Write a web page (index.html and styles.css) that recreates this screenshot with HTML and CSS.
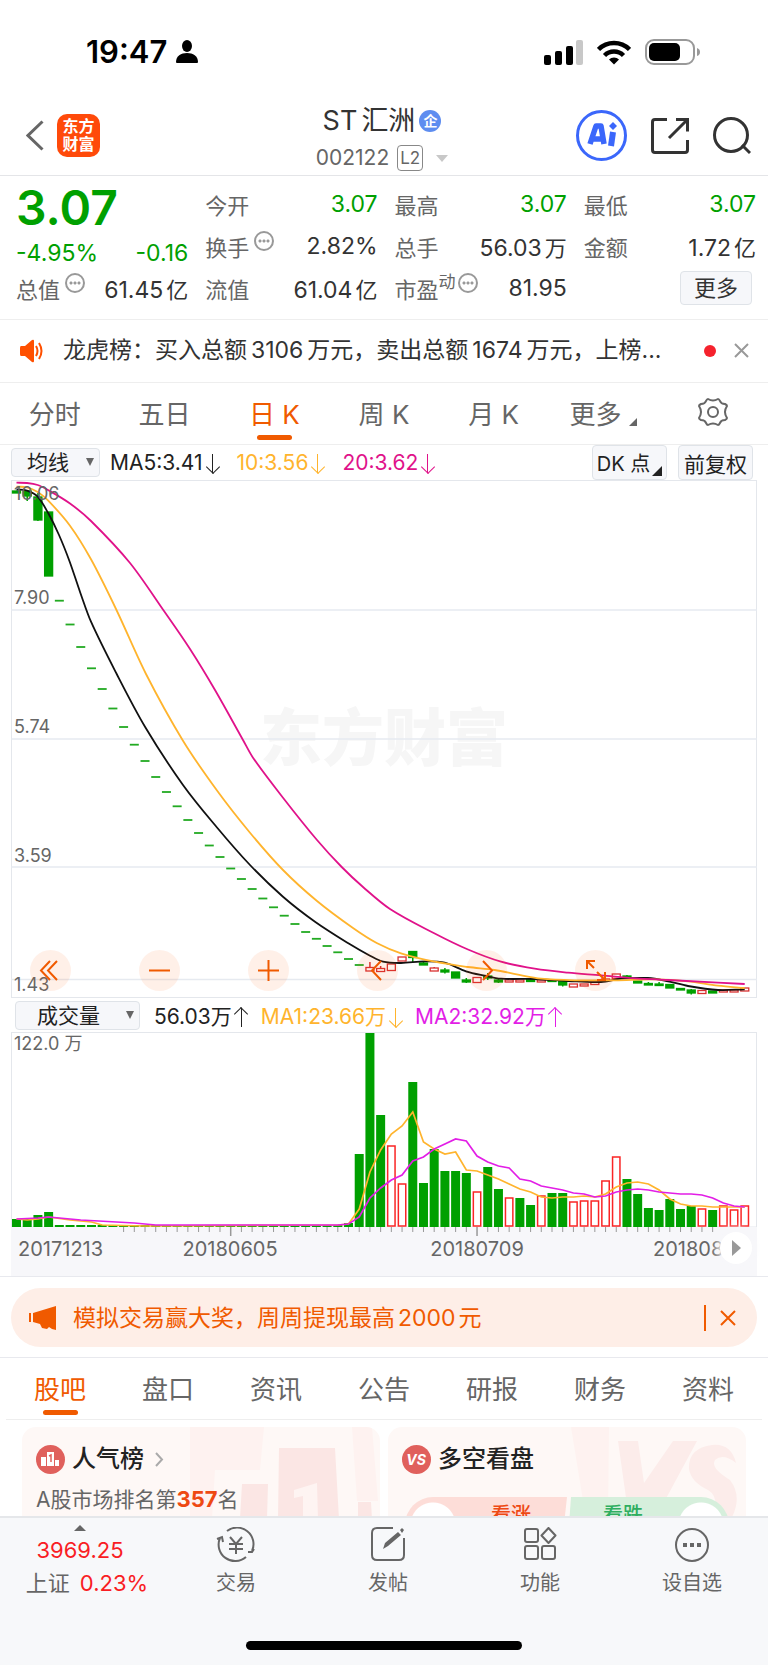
FILE: index.html
```html
<!DOCTYPE html>
<html lang="zh-CN">
<head>
  <meta charset="UTF-8">
  <title>ST汇洲 002122</title>
  <meta name="viewport" content="width=device-width, initial-scale=1.0">
  <link rel="stylesheet" href="styles.css">
</head>
<body>

  <div class="statusbar">
    <span class="clock">19:47
      <svg width="22" height="24" viewBox="0 0 22 24"><ellipse cx="11" cy="6" rx="5" ry="6"/><path d="M0 22c0-6 5-9 11-9s11 3 11 9q0 1-1 1H1q-1 0-1-1z"/></svg>
    </span>
    <span class="status-icons">
      <svg width="39" height="25" viewBox="0 0 39 25"><rect y="15" width="7" height="10" rx="2"/><rect x="11" y="11" width="7" height="14" rx="2"/><rect x="22" y="6" width="7" height="19" rx="2"/><rect x="32" width="7" height="25" rx="2" fill="#c8c8c8"/></svg>
      <svg width="34" height="25" viewBox="0 0 34 25" fill="none" stroke="#000" stroke-width="4.5"><path d="M1.500 9.500a22 22 0 0 1 31 0"/><path d="M7.500 15.500a13.500 13.500 0 0 1 19 0"/><path d="M17 24.500l-5-5a7 7 0 0 1 10 0z" fill="#000" stroke="none"/></svg>
      <svg width="55" height="26" viewBox="0 0 55 26"><rect x="1" y="1" width="48" height="24" rx="8" fill="none" stroke="#999" stroke-width="2"/><rect x="4" y="4" width="31" height="18" rx="5"/><path d="M52 9q3 1 3 4t-3 4z" fill="#999"/></svg>
    </span>
  </div>

  <header class="topbar">
    <div class="top-left">
      <button class="icon-btn" aria-label="返回"><svg width="18" height="31" viewBox="0 0 18 31" fill="none" stroke="#666" stroke-width="3"><path d="M16.500 1.500L2 15.500l14.500 14"/></svg></button>
      <a class="logo" href="#">东方<br>财富</a>
    </div>
    <div class="stock">
      <h1>ST<span>汇洲</span><i class="badge">企</i></h1>
      <button class="code">002122 <span class="l2">L2</span><i class="caret"></i></button>
    </div>
    <div class="top-right">
      <button class="icon-btn" aria-label="AI">
        <svg width="51" height="51" viewBox="0 0 51 51"><circle cx="25.500" cy="25.500" r="24" fill="#fff" stroke="#3b67fb" stroke-width="3"/><path d="M14 34L20 16h5l3 18M17 29h9" fill="none" stroke="#3b67fb" stroke-width="5.500" stroke-linejoin="round"/><path d="M37 22l-2 14" stroke="#3b67fb" stroke-width="6"/><path d="M37 12l4 4-4 4-4-4z" fill="#3b67fb"/></svg>
      </button>
      <button class="icon-btn" aria-label="分享">
        <svg width="38" height="36" viewBox="0 0 38 36" fill="none" stroke="#333" stroke-width="3"><path d="M16 1.500H4Q1.500 1.500 1.500 4v28q0 2.500 2.500 2.500h30q2.500 0 2.500-2.500V22M25 1.500h11.500v12M36 2L18 20"/></svg>
      </button>
      <button class="icon-btn" aria-label="搜索">
        <svg width="38" height="38" viewBox="0 0 38 38" fill="none" stroke="#333" stroke-width="3"><circle cx="18" cy="18" r="16.500"/><path d="M29 28l8 8"/></svg>
      </button>
    </div>
  </header>

  <main>
    <section class="quote">
      <div class="price">3.07</div>
      <div class="item up"><span>今开</span><b>3.07</b></div>
      <div class="item up"><span>最高</span><b>3.07</b></div>
      <div class="item up"><span>最低</span><b>3.07</b></div>

      <div class="change"><span>-4.95%</span><span>-0.16</span></div>
      <div class="item"><span>换手<i class="dots"></i></span><b>2.82%</b></div>
      <div class="item"><span>总手</span><b>56.03<em>万</em></b></div>
      <div class="item"><span>金额</span><b>1.72<em>亿</em></b></div>

      <div class="item"><span>总值<i class="dots"></i></span><b>61.45<em>亿</em></b></div>
      <div class="item"><span>流值</span><b>61.04<em>亿</em></b></div>
      <div class="item"><span>市盈<sup>动</sup><i class="dots"></i></span><b>81.95</b></div>
      <div class="more-cell"><button class="more">更多</button></div>
    </section>

    <section class="notice">
      <svg width="24" height="28" viewBox="0 0 24 28" fill="#ff5000"><path d="M1 9h4l7-6q2-1 2 1v20q0 2-2 1l-7-6H1q-1 0-1-2v-6q0-2 1-2z"/><path d="M16 9q3 5 0 10M19 6q5 8 0 16" fill="none" stroke="#ff5000" stroke-width="2"/></svg>
      <p>龙虎榜：买入总额<span>3106</span>万元，卖出总额<span>1674</span>万元，上榜...</p>
      <i class="dot"></i>
      <button class="icon-btn" aria-label="关闭"><svg width="15" height="15" viewBox="0 0 15 15" stroke="#999" stroke-width="2"><path d="M1 1l13 13M14 1L1 14"/></svg></button>
    </section>

    <nav class="tabs">
      <button>分时</button>
      <button>五日</button>
      <button class="active">日 K</button>
      <button>周 K</button>
      <button>月 K</button>
      <button>更多<i class="corner"></i></button>
      <button aria-label="设置"><svg width="30" height="28" viewBox="0 0 30 28" fill="none" stroke="#666" stroke-width="2"><path d="M10 1q5 3 10 0 1 0 2 2 1 3 5 3 2 1 2 2-4 6 0 12 0 1-2 2-4 0-5 3-1 2-2 2-5-3-10 0-1 0-2-2-1-3-5-3-2-1-2-2 4-6 0-12 0-1 2-2 4 0 5-3 1-2 2-2z" stroke-linejoin="round"/><circle cx="15" cy="14" r="5"/></svg></button>
    </nav>

    <div class="ma-row">
      <label class="picker"><select aria-label="均线"><option>均线</option></select></label>
      <span>MA5:3.41<i class="arrow"></i></span>
      <span class="c-orange">10:3.56<i class="arrow"></i></span>
      <span class="c-pink">20:3.62<i class="arrow"></i></span>
      <div class="ma-btns">
        <button class="dk">DK 点</button>
        <button>前复权</button>
      </div>
    </div>

    <div class="chart">
      <svg id="kline" viewBox="11 480 746 518"></svg>
      <div class="chart-btns">
        <button aria-label="最左"><svg viewBox="0 0 41 41"><path d="M20 11l-9 9.500 9 9.500M27 11l-9 9.500 9 9.500"/></svg></button>
        <button aria-label="缩小"><svg viewBox="0 0 41 41"><path d="M10 20.500h21"/></svg></button>
        <button aria-label="放大"><svg viewBox="0 0 41 41"><path d="M10 20.500h21M20.500 10v21"/></svg></button>
        <button aria-label="左移"><svg viewBox="0 0 41 41"><path d="M24 11l-9 9.500 9 9.500"/></svg></button>
        <button aria-label="右移"><svg viewBox="0 0 41 41"><path d="M17 11l9 9.500-9 9.500"/></svg></button>
        <button aria-label="全屏"><svg viewBox="0 0 41 41"><path d="M12 19v-8h8M12 11l7 7M30 22v8h-8M30 30l-8-8"/></svg></button>
      </div>
    </div>

    <div class="vol-row">
      <label class="picker wide"><select aria-label="成交量"><option>成交量</option></select></label>
      <span>56.03万<i class="arrow rise"></i></span>
      <span class="c-orange">MA1:23.66万<i class="arrow"></i></span>
      <span class="c-purple">MA2:32.92万<i class="arrow rise"></i></span>
    </div>

    <div class="chart">
      <svg id="volume" viewBox="11 1032 746 244"></svg>
      <button class="play" aria-label="下一页"><svg width="11" height="16" viewBox="0 0 11 16" fill="#999"><path d="M1 0l9 8-9 8z"/></svg></button>
    </div>

    <div class="promo-wrap">
      <div class="promo">
        <svg width="28" height="26" viewBox="0 0 28 26" fill="#f05a00"><path d="M0 8h2v9H0zM4 8L27 1v24l-4-1-3-2-2 2-5-1-2-4-7-2z"/></svg>
        <a href="#">模拟交易赢大奖，周周提现最高<span>2000</span>元</a>
        <button class="icon-btn" aria-label="关闭"><svg width="16" height="16" viewBox="0 0 16 16" stroke="#f05a00" stroke-width="2"><path d="M1 1l14 14M15 1L1 15"/></svg></button>
      </div>
    </div>

    <nav class="tabs info-tabs">
      <button class="active">股吧</button>
      <button>盘口</button>
      <button>资讯</button>
      <button>公告</button>
      <button>研报</button>
      <button>财务</button>
      <button>资料</button>
    </nav>

    <div class="cards">
      <section class="card">
        <svg class="card-bg" width="190" height="92" viewBox="0 0 190 92"><path d="M0 0h74l-4 43H25l-3 49H0zM162 0h20l6 74h-21z" fill="#fef2f0"/><path d="M89 21h56l4 71H88zM52 57h26l-1 35H50zM168 75h13l1 17h-14z" fill="#fbe6e4"/><path d="M104 63l23-7 1 36h-15V69l-9 2z" fill="#fef4f2"/></svg>
        <h2>
          <svg width="29" height="29" viewBox="0 0 29 29"><circle cx="14.500" cy="14.500" r="14.500" fill="#e0605c"/><path d="M5 12h5v9H5zM11 7h7v14h-7zM19 15h4v6h-4z" fill="#fff"/><path d="M13 11l2-1v7" fill="none" stroke="#e0605c" stroke-width="1.500"/></svg>
          人气榜
          <svg width="9" height="15" viewBox="0 0 9 15" fill="none" stroke="#aaa" stroke-width="2"><path d="M1 1l6 6.500L1 14"/></svg>
        </h2>
        <p>A股市场排名第<strong>357</strong>名</p>
      </section>
      <section class="card">
        <svg class="card-bg" width="190" height="92" viewBox="0 0 190 92"><path d="M15 0h38l-1 92H30z" fill="#fef2f0"/><path d="M62 14h20l6 42 29-42h24L99 92H73zM180 36q-5-20-24-18-24 3-23 24 2 13 19 21 12 7 5 29h18q12-22-1-39-20-12-15-20 8-7 21 3z" fill="#fcecea"/></svg>
        <h2>
          <svg width="29" height="29" viewBox="0 0 29 29"><circle cx="14.500" cy="14.500" r="14.500" fill="#e0605c"/><text x="14" y="20" text-anchor="middle" class="vs">VS</text></svg>
          多空看盘
        </h2>
        <div class="vote">
          <button class="vote-up">看涨</button>
          <button class="vote-down">看跌</button>
        </div>
      </section>
    </div>
  </main>

  <footer class="bottombar">
    <a class="index" href="#">
      <i class="tri"></i>
      <span>3969.25</span>
      <span><em>上证</em>0.23%</span>
    </a>
    <a href="#">
      <svg width="40" height="36" viewBox="0 0 40 36"><path d="M11 4a16.500 16.500 0 0 1 25 20M30 30A16.500 16.500 0 0 1 4 11M1 12l5-2 1 5M32 25l4 0 2-3"/><path d="M14 10l6 7 6-7M20 17v10M13 17h14M13 22h14"/></svg>
      交易
    </a>
    <a href="#">
      <svg width="34" height="34" viewBox="0 0 34 34"><path d="M22 1H6Q1 1 1 6v22q0 5 5 5h22q5 0 5-5V11"/><path d="M12 22l2-6L27 5l3 3-13 11zM29 3l2-2 2 2-2 3z" fill="#666" stroke="none"/></svg>
      发帖
    </a>
    <a href="#">
      <svg width="34" height="34" viewBox="0 0 34 34"><rect x="2" y="2" width="13" height="13" rx="2"/><rect x="2" y="19" width="13" height="13" rx="2"/><rect x="19" y="19" width="13" height="13" rx="2"/><path d="M25.500 1l7 7.500-7 7.500-7-7.500z" stroke-linejoin="round"/></svg>
      功能
    </a>
    <a href="#">
      <svg width="36" height="36" viewBox="0 0 36 36"><circle cx="18" cy="18" r="16"/><path d="M9 16h4v4H9zM16 16h4v4h-4zM23 16h4v4h-4z" fill="#666" stroke="none"/></svg>
      设自选
    </a>
    <div class="home"></div>
  </footer>

  <script src="script.js"></script>
</body>
</html>
```
FILE: styles.css
```css
* {
  box-sizing: border-box;
}

body {
  margin: 0;
  height: 100vh;
  display: flex;
  flex-direction: column;
  overflow: hidden;
  background: #fff;
  color: #333;
  font-family: Inter, "Noto Sans CJK SC", sans-serif;
  font-size: 22px;
}

button, select {
  font: inherit;
  color: inherit;
  background: none;
  border: 0;
  padding: 0;
  margin: 0;
}

a {
  color: inherit;
  text-decoration: none;
}

i, em, b {
  font-style: normal;
  font-weight: normal;
}

svg {
  display: block;
  flex: none;
}

h1, h2, p {
  margin: 0;
  font-weight: normal;
}

.icon-btn {
  display: block;
}

/* status bar */
.statusbar {
  display: flex;
  justify-content: space-between;
  align-items: center;
  padding: 34px 68px 26px 86px;
  line-height: 36px;
  color: #000;
}

.clock {
  display: flex;
  align-items: center;
  gap: 9px;
  font-size: 31px;
  font-weight: 600;
}

.status-icons {
  display: flex;
  align-items: center;
  gap: 14px;
}

/* title bar */
.topbar {
  display: grid;
  grid-template-columns: 1fr auto 1fr;
  align-items: center;
  padding: 8px 17px 4px 13px;
  border-bottom: 1px solid #e4e5e8;
}

.top-left, .top-right {
  display: flex;
  align-items: center;
  padding-bottom: 4px;
}

.top-left {
  gap: 13px;
  padding-left: 13px;
}

.top-right {
  justify-content: flex-end;
  gap: 24px;
}

.logo {
  width: 43px;
  height: 43px;
  padding-top: 3px;
  border-radius: 10px;
  background: #ff4a0a;
  color: #fff;
  font-size: 16px;
  font-weight: bold;
  line-height: 18px;
  text-align: center;
}

.stock {
  display: flex;
  flex-direction: column;
  align-items: center;
  gap: 7px;
}

.stock h1 {
  display: flex;
  align-items: center;
  gap: 4px;
  font-size: 27px;
  line-height: 34px;
}

.badge {
  width: 22px;
  height: 22px;
  border-radius: 50%;
  background: #5e8df0;
  color: #fff;
  font-size: 14px;
  font-weight: bold;
  line-height: 21px;
  text-align: center;
}

.code {
  display: flex;
  align-items: center;
  gap: 8px;
  color: #666;
  font-size: 21px;
  line-height: 26px;
}

.l2 {
  padding: 0 2px;
  border: 1px solid #888;
  border-radius: 4px;
  font-size: 17px;
  line-height: 24px;
}

.caret {
  margin-left: 5px;
  border: 6px solid transparent;
  border-top: 7px solid #c8c8c8;
  border-bottom: 0;
}

/* main column, cut off by the bottom bar */
main {
  flex: 1;
  min-height: 0;
  overflow: hidden;
}

.quote {
  display: grid;
  grid-template-columns: repeat(4, 1fr);
  column-gap: 17px;
  grid-auto-rows: 42px;
  padding: 7px 12px 10px 16px;
  border-bottom: 1px solid #eee;
}

.quote > div {
  display: flex;
  align-items: center;
  justify-content: space-between;
  white-space: nowrap;
}

.quote .price {
  padding-top: 6px;
  color: #00a000;
  font-size: 48px;
  font-weight: 600;
}

.quote .change {
  padding-top: 14px;
  color: #00a000;
  font-size: 23px;
}

.item span {
  display: flex;
  align-items: center;
  color: #666;
}

.item b {
  font-size: 23px;
}

.item em {
  margin-left: 3px;
  font-size: 22px;
}

.up b {
  color: #00a000;
}

.item sup {
  align-self: flex-start;
  font-size: 17px;
  line-height: 20px;
}

.dots {
  width: 20px;
  height: 20px;
  margin: 0 0 10px 5px;
  border: 2px solid #999;
  border-radius: 50%;
  background: radial-gradient(circle, #999 1px, transparent 2px) center / 4px 4px repeat-x;
  background-clip: content-box;
  padding: 0 2px;
}

sup + .dots {
  margin-left: 2px;
}

.quote .more-cell {
  justify-content: flex-end;
}

.more {
  width: 72px;
  height: 34px;
  margin-right: 4px;
  border: 1px solid #dfe3e8;
  border-radius: 4px;
  background: #f6f7fa;
  line-height: 32px;
}

.notice {
  display: flex;
  align-items: center;
  padding: 15px 19px 16px 20px;
  border-bottom: 1px solid #eee;
  line-height: 31px;
}

.notice p {
  flex: 1;
  margin-left: 19px;
  font-size: 23px;
  white-space: nowrap;
}

.notice p span {
  margin: 0 4px;
}

.dot {
  width: 12px;
  height: 12px;
  margin-right: 18px;
  border-radius: 50%;
  background: #f5222d;
}

.tabs {
  display: grid;
  grid-template-columns: repeat(7, 1fr);
  border-bottom: 1px solid #eee;
}

.tabs button {
  display: flex;
  align-items: center;
  justify-content: center;
  position: relative;
  height: 61px;
  padding-bottom: 3px;
  color: #666;
  font-size: 26px;
}

.tabs .active {
  color: #f05a00;
}

.tabs .active::after {
  content: "";
  position: absolute;
  bottom: 4px;
  width: 35px;
  height: 5px;
  border-radius: 3px;
  background: #f05a00;
}

.corner {
  align-self: flex-end;
  margin: 0 0 15px 8px;
  border: 4px solid #666;
  border-top-color: transparent;
  border-left-color: transparent;
}

/* indicator rows */
.ma-row, .vol-row {
  display: flex;
  align-items: center;
  gap: 19px;
  padding: 0 15px 0 11px;
  height: 35px;
  color: #222;
  font-size: 21px;
  white-space: nowrap;
}

.vol-row {
  gap: 14px;
  height: 34px;
  padding-left: 15px;
}

.picker {
  position: relative;
  display: flex;
}

.picker select {
  appearance: none;
  width: 89px;
  height: 29px;
  padding-left: 15px;
  border: 1px solid #dfe3e8;
  border-radius: 4px;
  background: #f6f7fa;
}

.picker.wide select {
  width: 125px;
  padding-left: 21px;
}

.picker::after {
  content: "";
  position: absolute;
  right: 6px;
  top: 10px;
  border: 4px solid transparent;
  border-top: 8px solid #666;
  border-bottom: 0;
}

.ma-row .picker {
  margin-right: -9px;
}

/* thin arrow drawn from a line and a rotated corner */
.arrow {
  display: inline-block;
  position: relative;
  width: 1px;
  height: 19px;
  margin: 0 5px 0 9px;
  background: currentColor;
  vertical-align: -3px;
}

.arrow::after {
  content: "";
  position: absolute;
  left: -4px;
  bottom: 1px;
  width: 9px;
  height: 9px;
  border-right: 1px solid;
  border-bottom: 1px solid;
  transform: rotate(45deg);
}

.arrow.rise {
  transform: rotate(180deg);
}

.c-orange { color: #ffb42d; }
.c-pink { color: #e0128a; }
.c-purple { color: #e21ee6; }

.ma-btns {
  display: flex;
  gap: 11px;
  margin-left: auto;
}

.ma-btns button {
  position: relative;
  width: 75px;
  height: 35px;
  border: 1px solid #dfe3e8;
  border-radius: 4px;
  background: #f6f7fa;
}

.ma-btns .dk {
  padding-right: 12px;
  font-size: 20px;
}

.dk::after {
  content: "";
  position: absolute;
  right: 4px;
  bottom: 3px;
  border: 5px solid #222;
  border-top-color: transparent;
  border-left-color: transparent;
}

/* charts */
.chart {
  position: relative;
  margin: 0 11px;
}

.chart > svg {
  width: 100%;
  height: auto;
}

.chart text {
  fill: #666;
  font-size: 18px;
}

.chart .date {
  font-size: 20px;
}

.chart .watermark {
  fill: #f6f6f6;
  font-size: 62px;
  font-weight: 900;
}

.chart-btns {
  position: absolute;
  left: 0;
  right: 0;
  bottom: 7px;
  display: flex;
  justify-content: space-between;
  padding: 0 141px 0 19px;
}

.chart-btns button {
  width: 41px;
  height: 41px;
  border-radius: 50%;
  background: rgba(255, 90, 0, 0.09);
}

.chart-btns path {
  fill: none;
  stroke: #f05a00;
  stroke-width: 2;
}

.play {
  position: absolute;
  right: 5px;
  bottom: 12px;
  width: 32px;
  height: 32px;
  display: flex;
  align-items: center;
  justify-content: center;
  border-radius: 50%;
  background: #fff;
  box-shadow: 0 0 8px 3px #f7f7fa;
}

.promo-wrap {
  padding: 11px 11px 10px;
  border: 1px solid #e8e9ee;
  border-width: 1px 0;
}

.promo {
  display: flex;
  align-items: center;
  gap: 16px;
  height: 59px;
  padding: 0 21px 0 18px;
  border-radius: 30px;
  background: #feeee7;
  color: #f05a00;
}

.promo a {
  flex: 1;
  padding-bottom: 3px;
  font-size: 23px;
}

.promo a span {
  margin: 0 3px;
}

.promo .icon-btn {
  padding: 5px 0 5px 14px;
  border-left: 2px solid #f05a00;
}

.info-tabs {
  margin: 0 6px;
}

.cards {
  display: grid;
  grid-template-columns: 1fr 1fr;
  gap: 8px;
  padding: 7px 22px 0;
}

.card {
  position: relative;
  overflow: hidden;
  height: 130px;
  padding: 15px 14px;
  border-radius: 14px;
  background: #fef8f6;
}

.card-bg {
  position: absolute;
  right: 0;
  top: 0;
}

.card h2 {
  position: relative;
  display: flex;
  align-items: center;
  gap: 7px;
  font-size: 24px;
  font-weight: 500;
  line-height: 34px;
  color: #222;
}

.card h2 svg:last-child:not(:first-child) {
  margin-left: 4px;
}

.card p {
  position: relative;
  margin-top: 6px;
  color: #666;
  font-size: 21px;
  line-height: 34px;
}

.card strong {
  color: #ee4913;
  font-size: 22px;
  font-weight: 700;
}

.vs {
  fill: #fff;
  font-size: 14px;
  font-weight: bold;
  font-style: italic;
}

.vote {
  position: relative;
  display: flex;
  margin: 21px 3px 0;
}

.vote button {
  flex: 1;
  height: 56px;
  padding: 0 36px 24px;
  font-size: 20px;
  font-weight: 500;
}

.vote .vote-up {
  border-radius: 28px 0 0 0;
  background: radial-gradient(circle at 28px 28px, #fff 22px, #fdddd8 23px);
  clip-path: polygon(0 0, 100% 0, calc(100% - 6px) 100%, 0 100%);
  color: #ee4913;
  text-align: right;
}

.vote .vote-down {
  border-radius: 0 28px 0 0;
  background: radial-gradient(circle at calc(100% - 28px) 28px, #fff 22px, #d6efdc 23px);
  clip-path: polygon(4px 0, 100% 0, 100% 100%, 0 100%);
  color: #2fae60;
  text-align: left;
}

/* bottom bar */
.bottombar {
  display: grid;
  grid-template-columns: 160px repeat(4, 1fr);
  border-top: 2px solid #e5e7ea;
  background: #f7f8fa;
  color: #666;
  font-size: 20px;
}

.bottombar a {
  display: flex;
  flex-direction: column;
  align-items: center;
  justify-content: space-between;
  height: 80px;
  padding-top: 9px;
  line-height: 30px;
}

.bottombar svg {
  fill: none;
  stroke: #666;
  stroke-width: 2;
}

.bottombar .index {
  color: #f91d24;
  font-size: 22px;
}

.bottombar .index em {
  margin: 0 10px 0 14px;
  color: #666;
}

.tri {
  border: 6px solid transparent;
  border-top: 0;
  border-bottom: 6px solid #666;
  margin-top: -2px;
}

.home {
  grid-column: 1 / -1;
  justify-self: center;
  width: 36%;
  height: 9px;
  margin: 43px 0 15px;
  border-radius: 5px;
  background: #000;
}
```
FILE: script.js
```js
const GREEN = "#00a000";
const RED = "#d93030";
const FIRST_X = 16.5;
const STEP = 10.71;

const xAt = i => FIRST_X + i * STEP;

// limit-down days, one flat dash each, starting with the 5th bar
const dashes = [
  600.7, 624.5, 647, 668.3, 689, 708.5, 727, 744.7, 761, 777, 792, 806.3, 820,
  833, 845.5, 857, 868.5, 879, 889, 898.5, 907.3, 915.7, 924, 932, 938.8, 946, 952.3, 959, 965
];

// [index, top, bottom, type, high, low]: g = fall, r = rise
const candles = [
  [0, 491, 493, "g"], [1, 491, 496, "g", 490, 501], [2, 497, 520, "g", 493, 521], [3, 512, 576, "g"],
  [33, 967.5, 971, "r", 962, 971], [34, 968.5, 971.5, "r", 966, 971.5], [35, 964, 970.5, "r"],
  [36, 957, 961, "r"], [37, 951.5, 957.5, "g", 951, 962], [38, 963, 965, "g", 961, 965],
  [39, 968, 971, "r", 967, 971], [40, 970, 972, "g", 968, 973.5], [41, 972, 978, "g"],
  [42, 980, 982, "g", 978, 983], [43, 977.5, 982.5, "r"], [44, 976, 978, "g", 973, 980],
  [45, 980, 982, "g", 979, 983], [46, 980, 982, "r"], [47, 980, 982, "r"], [48, 979.5, 981.5, "g"],
  [49, 980, 982, "r"], [50, 980, 981.5, "g"], [51, 981.5, 985, "g", 980, 986.5], [52, 984, 987, "r"],
  [53, 984, 986, "r"], [54, 982, 984.5, "r"], [55, 979, 980.5, "r"], [56, 974, 978.5, "r"],
  [57, 976, 977.5, "g", 975, 979], [58, 981, 983, "g"], [59, 983.5, 985, "g", 982, 985],
  [60, 984, 985.5, "g", 982, 986], [61, 984.5, 988, "g"], [62, 988.5, 990, "g"],
  [63, 990, 993, "g", 989, 994.5], [64, 990.5, 993.5, "r"], [65, 991, 993, "g"], [66, 990, 992, "r"],
  [67, 990, 992, "r"], [68, 988, 991, "r"]
];

const priceLines = [
  ["#111", "16.5,489.5 27,490.7 37.7,496.7 48.3,513.3 59,535 69.7,561.7 80.3,592.7 91,621.7 116.7,674 145,726.7 183,785 217,827.5 250,865 283,896.7 315,921.7 350,944.3 370,955.7 383,961.7 401,963 424.7,961.3 444.7,962.7 466,971.3 484.7,975.7 501,978.7 534.7,979 568,981 601,982 621,978.7 648,978 668,981.3 688,986 718,990 744.7,989.3"],
  ["#ffb42d", "16.5,486.7 27,487.3 37.7,492 48.3,500.7 70,525.7 91,559.3 116,609 146,674 183,740.7 217,790.5 250,832.7 283,870 317,901 353,928 376.7,943 401,953.3 434.7,961.7 468,967 494.7,970 518,974.7 541,978.7 574.7,980.3 615,980.3 655,979.3 688,981.3 718,985.7 744.7,988"],
  ["#e0128a", "16.5,482.7 27,483 37.7,485 48,490 70,503.5 91,521 130,563 164,611 190,649 215,690 243,740 253,757.7 283,797.7 317,840 341.7,867 363,887 390,909 434.7,933.5 468,949.5 501,961.7 534.7,968.7 568,972.7 601,975.3 634.7,978.3 668,980 744.7,984"]
];

const volumes = [8, 8, 12, 15]
  .concat(Array(27).fill(2), [4, 73, 194, 112, 82, 44, 145, 44, 78, 56, 56, 54, 36, 60, 38, 30, 29, 22, 32, 34, 34,
    26, 27, 27, 47, 71, 48, 33, 19, 17, 28, 18, 21, 19, 17, 22, 18, 22]);
const risen = [35, 36, 43, 46, 49, 52, 53, 54, 55, 56, 64, 66, 67, 68];
const majorTicks = [20, 43];

// [index, height] pairs for the lead-in, then one height for each bar from 31 on
const volumeLines = [
  ["#ffb42d", [[0, 8], [1, 7], [2, 8], [3, 10], [5, 7], [7, 5], [8, 2], [12, 1], [30, 2]],
    [3, 18, 55, 77, 93, 101, 115, 85, 78, 73, 75, 57, 56, 52, 48, 43, 38, 35, 30, 29, 30, 30, 31, 30, 33, 40, 44, 45, 43, 37, 28, 23, 21, 21, 20, 20, 20, 20]],
  ["#e21ee6", [[0, 8], [2, 9], [3, 10], [6, 7], [11, 4], [13, 2], [30, 2]],
    [3, 10, 29, 39, 47, 52, 66, 70, 78, 83, 88, 86, 71, 65, 61, 59, 48, 46, 41, 39, 37, 34, 33, 30, 31, 35, 37, 38, 37, 35, 34, 33, 33, 32, 29, 24, 21, 20]]
];

function line(x1, y1, x2, y2, color, width = 1) {
  return `<line x1="${x1}" y1="${y1}" x2="${x2}" y2="${y2}" stroke="${color}" stroke-width="${width}"/>`;
}

function polyline(points, color) {
  return `<polyline points="${points}" fill="none" stroke="${color}" stroke-width="1.7"/>`;
}

// bezier through all points, handles scaled to each segment so uneven spacing stays smooth
function curve(points, color) {
  const p = points.split(" ").map(s => s.split(",").map(Number));
  const slope = i => {
    const a = p[Math.max(i - 1, 0)];
    const b = p[Math.min(i + 1, p.length - 1)];
    return (b[1] - a[1]) / (b[0] - a[0]);
  };
  let d = `M${p[0]}`;
  for (let i = 1; i < p.length; i++) {
    const dx = (p[i][0] - p[i - 1][0]) / 3;
    d += `C${p[i - 1][0] + dx},${p[i - 1][1] + dx * slope(i - 1)} ${p[i][0] - dx},${p[i][1] - dx * slope(i)} ${p[i]}`;
  }
  return `<path d="${d}" fill="none" stroke="${color}" stroke-width="1.8"/>`;
}

function drawKline() {
  let out = `<rect x="11.5" y="480.5" width="745" height="517" fill="#fff" stroke="#e4e7ec"/>`;
  out += `<text class="watermark" x="384" y="761" text-anchor="middle">东方财富</text>`;
  [610, 739, 867, 979.5].forEach(y => out += line(11, y, 757, y, "#e6eaf0", 1.5));

  dashes.forEach((y, n) => {
    const x = xAt(n + 4);
    out += line(x - 4.5, y, x + 4.5, y, "#22aa22", 1.8);
  });

  candles.forEach(([i, top, bottom, type, high, low]) => {
    const x = xAt(i);
    const color = type === "g" ? GREEN : RED;
    if (high) out += line(x, high, x, top, color, 1.5) + line(x, bottom, x, low, color, 1.5);
    out += `<rect x="${x - 4}" y="${top}" width="8" height="${bottom - top}" stroke="${color}" stroke-width="1.3" fill="${type === "g" ? GREEN : "#fff"}"/>`;
  });

  priceLines.forEach(([color, points]) => out += curve(points, color));
  [["10.06", 500], ["7.90", 604], ["5.74", 733], ["3.59", 862], ["1.43", 991]].forEach(([label, y]) => {
    out += `<text x="14" y="${y}">${label}</text>`;
  });
  document.getElementById("kline").innerHTML = out;
}

function drawVolume() {
  const base = 1227;
  let out = `<rect x="11.5" y="1032.5" width="745" height="194.5" fill="#fff" stroke="#e4e7ec"/>`;
  out += `<rect x="11" y="${base}" width="746" height="49" fill="#f7f7fa"/>`;

  volumes.forEach((h, i) => {
    const x = xAt(i);
    if (risen.includes(i)) {
      out += `<rect x="${x - 3.7}" y="${base - h + 1}" width="7.4" height="${h - 2}" fill="#fff" stroke="#fa2525" stroke-width="1.5"/>`;
    } else {
      out += `<rect x="${x - 4.5}" y="${base - h}" width="9" height="${h}" fill="${GREEN}"/>`;
    }
    if (i >= 10 && i <= 65) {
      const major = majorTicks.includes(i);
      out += line(x, base, x, base + (major ? 9 : 5), "#999", major ? 1.5 : 1);
    }
  });

  volumeLines.forEach(([color, lead, rest]) => {
    const points = lead.concat(rest.map((h, n) => [n + 31, h]));
    out += polyline(points.map(([i, h]) => `${xAt(i)},${base - h}`).join(" "), color);
  });

  out += `<text x="14" y="1050">122.0 万</text>`;
  [["20171213", 18, "start"], ["20180605", 230, "middle"], ["20180709", 477, "middle"], ["201808", 653, "start"]].forEach(([label, x, anchor]) => {
    out += `<text class="date" x="${x}" y="1256" text-anchor="${anchor}">${label}</text>`;
  });
  document.getElementById("volume").innerHTML = out;
}

drawKline();
drawVolume();
```
